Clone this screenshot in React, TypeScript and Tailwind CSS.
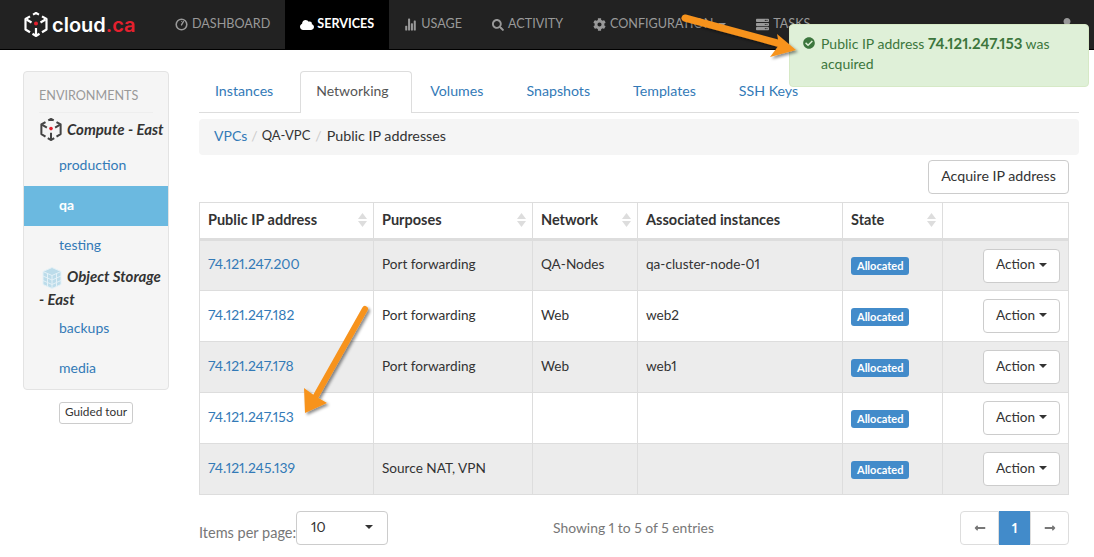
import {
  FaCheckCircle,
  FaCloud,
  FaCog,
  FaLongArrowAltLeft,
  FaLongArrowAltRight,
  FaSearch,
  FaServer,
  FaUser,
} from "react-icons/fa";
import { IoStatsChart } from "react-icons/io5";

const ROWS = [
  { ip: "74.121.247.200", purposes: "Port forwarding", network: "QA-Nodes", instance: "qa-cluster-node-01" },
  { ip: "74.121.247.182", purposes: "Port forwarding", network: "Web", instance: "web2" },
  { ip: "74.121.247.178", purposes: "Port forwarding", network: "Web", instance: "web1" },
  { ip: "74.121.247.153", purposes: "", network: "", instance: "" },
  { ip: "74.121.245.139", purposes: "Source NAT, VPN", network: "", instance: "" },
];

const TABS = ["Instances", "Networking", "Volumes", "Snapshots", "Templates", "SSH Keys"];

function CubeLogo({ className, stroke }: { className: string; stroke: string }) {
  return (
    <svg viewBox="0 0 24 25" className={className} fill="none" stroke={stroke} strokeWidth="2.2">
      <path d="M9 2.6 12 1l3 1.6M18 4.4l4.5 2.6v10.5L18 20.2M6 4.4 1.5 7v10.5L6 20.2" strokeLinejoin="round" />
      <path d="M8.5 21.8 12 24l3.5-2.2M12 16v7M2.5 7.5l5 3M21.5 7.5l-5 3" />
      <circle cx="12" cy="11.5" r="2" fill="#e5202e" stroke="none" />
    </svg>
  );
}

function StorageIcon() {
  return (
    <svg viewBox="0 0 20 22" className="mr-[5px] inline-block h-[22px] w-[20px] align-middle" fill="#bcdcea" stroke="#e4f1f7" strokeWidth="1">
      <path d="M10 .5 19 4.500v13L10 21.500 1 17.500v-13Z" />
      <path d="M1 4.500l9 4 9-4M10 8.500v13M1 9l9 4 9-4M1 13.500l9 4 9-4M5.500 6.500v13M14.500 6.500v13" fill="none" />
    </svg>
  );
}

function GaugeIcon() {
  return (
    <svg viewBox="0 0 14 14" className="h-[13px] w-[13px]" fill="none" stroke="currentColor">
      <circle cx="7" cy="7" r="5.700" strokeWidth="1.700" />
      <path d="M7 7.500 9 4" strokeWidth="1.500" strokeLinecap="round" />
      <circle cx="7" cy="3.500" r=".6" fill="currentColor" stroke="none" />
    </svg>
  );
}

function SortIcon() {
  return (
    <svg viewBox="0 0 9 14" className="mr-[-2px] h-[14px] w-[9px]" fill="#ddd">
      <path d="M4.500 0 9 6H0Z" />
      <path d="M0 8h9l-4.500 6Z" />
    </svg>
  );
}

function Header({ label, sort = true, w }: { label: string; sort?: boolean; w: string }) {
  return (
    <th className={`${w} h-[37px] border border-[#ddd] border-b-[3px] px-2 pb-[2px] text-left font-bold text-[#333]`}>
      <div className="flex items-center justify-between">
        <span>{label}</span>
        {sort && <SortIcon />}
      </div>
    </th>
  );
}

function NavItem({ icon, label }: { icon: React.ReactNode; label: string }) {
  return (
    <div className="flex h-full items-center gap-[4px] px-[15px] text-[#999]">
      {icon}
      <span>{label}</span>
    </div>
  );
}

function Caret({ color = "border-t-[#333]" }: { color?: string }) {
  return <span className={`border-x-[4px] border-t-[4px] border-x-transparent ${color}`} />;
}

export default function App() {
  return (
    <div className="relative h-[557px] w-[1094px] overflow-hidden bg-white font-['Lato','Liberation_Sans',sans-serif] text-[14px] text-[#333] [font-variant-numeric:proportional-nums]">
      {/* Navbar */}
      <div className="flex h-[50px] items-center border-b border-black bg-[#222] text-[12.6px]">
        <div className="flex w-[160px] items-center pl-[24px]">
          <CubeLogo className="h-[25px] w-[24px]" stroke="#fff" />
          <span className="ml-[4px] font-['Inter',sans-serif] text-[20px] font-semibold leading-none text-white">
            cloud<span className="text-[#e5202e]">.ca</span>
          </span>
        </div>
        <NavItem icon={<GaugeIcon />} label="DASHBOARD" />
        <div className="flex h-full w-[104px] items-center justify-center gap-[3px] bg-black font-bold text-white">
          <FaCloud className="text-[14px]" />
          <span>SERVICES</span>
        </div>
        <NavItem icon={<IoStatsChart className="text-[13px]" />} label="USAGE" />
        <NavItem icon={<FaSearch className="text-[12px]" />} label="ACTIVITY" />
        <NavItem icon={<FaCog className="text-[13px]" />} label="CONFIGURATION" />
        <div className="ml-[-10px] mr-[15px] flex items-center">
          <Caret color="border-t-[#999]" />
        </div>
        <NavItem icon={<FaServer className="text-[13px]" />} label="TASKS" />
        <FaUser className="ml-auto mr-[20px] text-[14px] text-[#999]" />
      </div>

      <div className="flex pl-[23px] pt-[21px]">
        {/* Sidebar */}
        <div className="w-[146px] shrink-0">
          <div className="rounded border border-[#e3e3e3] bg-[#f5f5f5] pb-[1px]">
            <div className="mx-[15px] flex h-[41px] items-end border-b border-[#eee] pb-[6px] text-[12.6px] text-[#999]">ENVIRONMENTS</div>
            <div className="flex h-[33px] items-center pl-[16px] font-bold italic">
              <CubeLogo className="mr-[5px] h-[23px] w-[22px] shrink-0" stroke="#444" />
              <span className="whitespace-nowrap text-[15px]">Compute - East</span>
            </div>
            <div className="flex h-[40px] items-center pb-[3px] pl-[35px] text-[#337ab7]">production</div>
            <div className="flex h-[40px] items-center bg-[#6bb9e0] pb-[3px] pl-[35px] font-bold text-white">qa</div>
            <div className="flex h-[40px] items-center pb-[3px] pl-[35px] text-[#337ab7]">testing</div>
            <div className="h-[42px] pl-[15px] pr-[4px] text-[15px] font-bold italic leading-[21px]">
              <span className="pl-[3px]" />
              <StorageIcon />
              Object Storage - East
            </div>
            <div className="flex h-[40px] items-center pb-[2px] pl-[35px] text-[#337ab7]">backups</div>
            <div className="flex h-[40px] items-center pb-[2px] pl-[35px] text-[#337ab7]">media</div>
          </div>
          <div className="mt-[12px] flex justify-center">
            <div className="rounded-[3px] border border-[#ccc] px-[5px] pb-[2px] text-[11.8px] leading-[18px]">Guided tour</div>
          </div>
        </div>

        {/* Main */}
        <div className="ml-[30px] w-[880px]">
          <div className="flex h-[42px] border-b border-[#ddd]">
            {TABS.map((tab) =>
              tab === "Networking" ? (
                <div key={tab} className="mr-[2px] h-[42px] w-[112px] rounded-t border border-b-0 border-[#ddd] bg-white pl-[15px] leading-[38px] text-[#555]">
                  {tab}
                </div>
              ) : (
                <div key={tab} className="mr-[11px] whitespace-nowrap px-[16px] text-[14.2px] leading-[40px] text-[#337ab7]">{tab}</div>
              ),
            )}
          </div>
          <div className="mt-[6px] flex h-[36px] items-center rounded bg-[#f5f5f5] px-[15px] pb-[3px]">
            <span className="text-[#337ab7]">VPCs</span>
            <span className="px-[4px] text-[#ccc]">/</span>
            <span className="text-[13px]">QA-VPC</span>
            <span className="px-[5px] text-[#ccc]">/</span>
            <span className="text-[14.3px]">Public IP addresses</span>
          </div>
          <div className="w-[870px]">
            <div className="mt-[5px] flex justify-end">
              <button className="h-[34px] w-[141px] rounded border border-[#ccc] bg-white pb-[2px] text-[14.2px]">Acquire IP address</button>
            </div>
            <table className="mt-[8px] w-full table-fixed border-collapse text-[14.5px]">
              <thead>
                <tr>
                  <Header label="Public IP address" w="w-[174px]" />
                  <Header label="Purposes" w="w-[159px]" />
                  <Header label="Network" w="w-[105px]" />
                  <Header label="Associated instances" sort={false} w="w-[205px]" />
                  <Header label="State" w="w-[100px]" />
                  <Header label="" sort={false} w="w-auto" />
                </tr>
              </thead>
              <tbody className="text-[13.6px]">
                {ROWS.map((row, i) => (
                  <tr key={row.ip} className={`h-[51px] ${i % 2 === 0 ? "bg-[#ececec]" : "bg-white"}`}>
                    <td className="border border-[#ddd] px-2 pb-[2px] text-[13.9px] text-[#337ab7]">{row.ip}</td>
                    <td className="border border-[#ddd] px-2 pb-[2px]">{row.purposes}</td>
                    <td className="border border-[#ddd] px-2 pb-[2px]">{row.network}</td>
                    <td className="border border-[#ddd] px-2 pb-[2px]">{row.instance}</td>
                    <td className="border border-[#ddd] px-2">
                      <span className="inline-block rounded-[3px] bg-[#428bca] px-[6px] text-[11px] font-bold leading-[18px] text-white">Allocated</span>
                    </td>
                    <td className="border border-[#ddd] px-2">
                      <div className="flex justify-end">
                        <button className="flex h-[34px] w-[77px] items-center justify-center gap-[4px] rounded border border-[#ccc] bg-white pb-[2px]">
                          Action
                          <Caret />
                        </button>
                      </div>
                    </td>
                  </tr>
                ))}
              </tbody>
            </table>
            {/* Footer */}
            <div className="mt-[16px] flex h-[34px] items-center text-[13.9px]">
              <div className="flex w-[354px] items-center">
                <span className="mt-[10px] text-[14.5px] text-[#777]">Items per page:</span>
                <div className="flex h-[34px] w-[92px] items-center justify-between rounded border border-[#ccc] pb-[2px] pl-[14px] pr-[14px]">
                  10
                  <Caret />
                </div>
              </div>
              <span className="text-[#777]">Showing 1 to 5 of 5 entries</span>
              <div className="ml-auto flex h-[34px] w-[109px]">
                <div className="flex w-[39px] items-center justify-center rounded-l border border-[#ddd] text-[#777]">
                  <FaLongArrowAltLeft className="text-[12px]" />
                </div>
                <div className="flex w-[31px] items-center justify-center bg-[#428bca] font-bold text-white">1</div>
                <div className="flex w-[39px] items-center justify-center rounded-r border border-[#ddd] text-[#777]">
                  <FaLongArrowAltRight className="text-[12px]" />
                </div>
              </div>
            </div>
          </div>
        </div>
      </div>

      {/* Toast */}
      <div className="absolute left-[789px] top-[24px] h-[63px] w-[300px] rounded border border-[#d6e9c6] bg-[#dff0d8] pl-[13px] pr-[15px] pt-[8px] leading-[20px] text-[#3c763d]">
        <div className="flex">
          <FaCheckCircle className="mr-[6px] mt-[4px] shrink-0 text-[12px]" />
          <span>
            Public IP address <b className="text-[15px]">74.121.247.153</b> was acquired
          </span>
        </div>
      </div>

      {/* Annotation arrows */}
      <svg className="pointer-events-none absolute left-0 top-0" width="1094" height="557">
        <defs>
          <filter id="arrow-shadow" x="-20%" y="-20%" width="140%" height="140%">
            <feDropShadow dx="2" dy="2" stdDeviation="1.500" floodColor="#000" floodOpacity="0.45" />
          </filter>
        </defs>
        <g filter="url(#arrow-shadow)">
          <path d="M685 18 781 44" stroke="#f7931e" strokeWidth="7" strokeLinecap="round" fill="none" />
          <path d="M777 34 796 50 770 57 779 45Z" fill="#f7931e" />
          <path d="M365 309 316 396" stroke="#f7931e" strokeWidth="6" strokeLinecap="round" fill="none" />
          <path d="M304 388 315 396 327 403 305 413Z" fill="#f7931e" />
        </g>
      </svg>
    </div>
  );
}
